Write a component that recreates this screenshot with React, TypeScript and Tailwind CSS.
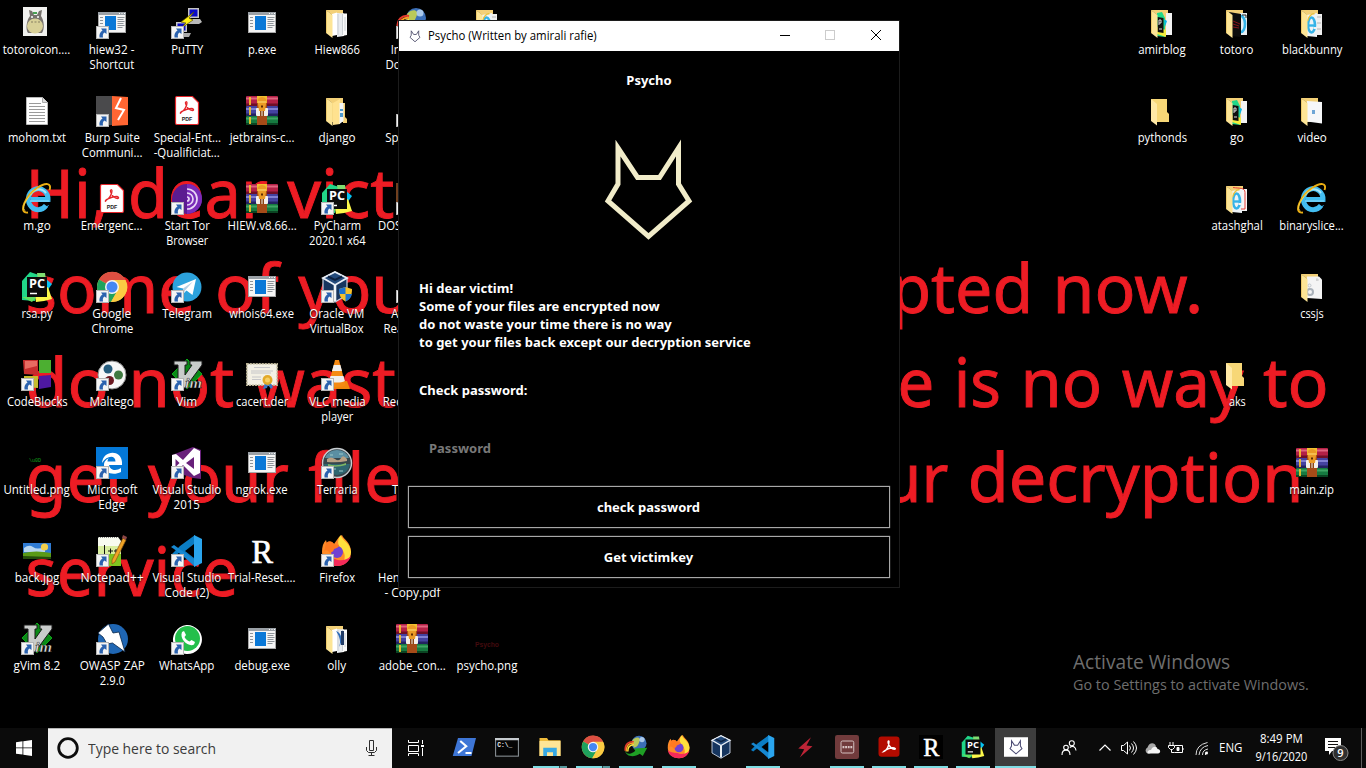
import { useLayoutEffect, useRef, useState } from "react";
import type { ReactNode } from "react";

/* Advance widths of the desktop UI face, in em. */
const ADVANCE: Record<string, number> = {
  a: 0.509, b: 0.588, c: 0.462, d: 0.589, e: 0.523, f: 0.313, g: 0.589, h: 0.565, i: 0.242, j: 0.242,
  k: 0.497, l: 0.242, m: 0.861, n: 0.566, o: 0.586, p: 0.588, q: 0.589, r: 0.348, s: 0.424, t: 0.339,
  u: 0.565, v: 0.479, w: 0.723, x: 0.459, y: 0.484, z: 0.452, " ": 0.274, ".": 0.245, ",": 0.217,
  A: 0.645, B: 0.573, C: 0.619, D: 0.701, E: 0.506, F: 0.488, G: 0.686, H: 0.71, I: 0.266, J: 0.357,
  K: 0.58, L: 0.471, M: 0.898, N: 0.748, O: 0.754, P: 0.56, Q: 0.754, R: 0.598, S: 0.531, T: 0.524,
  U: 0.687, V: 0.621, W: 0.934, X: 0.59, Y: 0.553, Z: 0.57, "-": 0.4, _: 0.415, "+": 0.684,
  "(": 0.302, ")": 0.302, ":": 0.217, "/": 0.389, "!": 0.284,
};
const textWidth = (s: string, size: number) =>
  [...s].reduce((sum, ch) => sum + (ADVANCE[ch] ?? 0.539), 0) * size;

function Fit({ text, size, center = false, width }: { text: string; size: number; center?: boolean; width?: number }) {
  const ref = useRef<HTMLSpanElement>(null);
  const [scale, setScale] = useState(1);
  useLayoutEffect(() => {
    if (ref.current) setScale((width ?? textWidth(text, size)) / ref.current.offsetWidth);
  }, [text, size, width]);
  return (
    <span
      ref={ref}
      className={center ? "inline-block origin-center whitespace-pre" : "inline-block origin-left whitespace-pre"}
      style={{ transform: `scaleX(${scale})` }}
    >
      {text}
    </span>
  );
}

/* ---------- icons (32 x 32 unless noted) ---------- */

const Exe = () => (
  <g>
    <rect x="2.500" y="5.500" width="27" height="20" fill="#f5f5f5" stroke="#a8a8a8" />
    <rect x="2" y="5" width="28" height="3" fill="#9aa0a6" />
    <path d="M23 6.500h1M25.500 6.500h1M28 6.500h1" stroke="#fff" />
    <rect x="9" y="9" width="11" height="14" fill="#0a78d7" />
    <path d="M4 10.500h3M4 13.500h3M4 16.500h3M4 19.500h3M21.500 10.500h7M21.500 12.500h6M21.500 14.500h7M21.500 16.500h6M21.500 18.500h7M21.500 20.500h5" stroke="#8d9399" />
  </g>
);

const Folder = ({ children }: { children?: ReactNode }) => (
  <g>
    <path d="M5 3h17v10l2 2v12H11V8z" fill="#f3d077" />
    {children}
    <path d="M5 3l6.500 5v23L5 26z" fill="#fde596" />
    <path d="M5.500 3.500V26" stroke="#e8c25f" strokeWidth=".8" />
  </g>
);
const Pages = () => (
  <g>
    <path d="M11 7l5-1.500V28l-5 1z" fill="#fff" />
    <path d="M16 6l7 .5V29l-7 1z" fill="#e9ecef" />
    <path d="M21 6.500h5V28l-5 1z" fill="#fafafa" />
    <path d="M17 7v21M21.500 7v21M24 10v14" stroke="#bfc5ca" strokeWidth=".8" />
  </g>
);
const EmptyFolder = () => (
  <g>
    <path d="M5 4h16v13l2 2v8H10z" fill="#f7d777" />
    <path d="M5 4l6 5v21.500L5 26z" fill="#ffe9a6" />
  </g>
);
const PagesFolder = () => <Folder><Pages /></Folder>;
const DjangoFolder = () => (
  <Folder>
    <path d="M12 8l7-4v25l-7 1z" fill="#ffe28f" />
    <path d="M22 8h2v14l2 2v4h-4z" fill="#f3d077" />
    <path d="M18.500 8h4v18l-4 3z" fill="#f2f5f8" />
    <path d="M19 14h3v2h-3zM19 18h3v4h-3z" fill="#4f9bd0" />
  </Folder>
);
const OllyFolder = () => (
  <Folder>
    <Pages />
    <path d="M15 8c6 2 7 10 3 16 2-5 1-10-3-16z" fill="#2c6ab8" />
    <path d="M20 8h3v14h-3z" fill="#203a64" />
  </Folder>
);
const PcFolder = () => (
  <Folder>
    <path d="M20 6h6v22h-6z" fill="#f3f3f3" />
    <path d="M11 6l5-1 3 6v19l-8-1z" fill="#21d789" />
    <path d="M11 20l9 3v7l-9-3z" fill="#f4ec3c" />
    <path d="M18 12l3 2-2 6z" fill="#07b8e6" />
    <path d="M11.500 10l6 1v15l-6-1z" fill="#101010" />
    <path d="M13 13v5m0-5h2v3h-2M13 22h3" stroke="#ddd" fill="none" />
  </Folder>
);
const IePart = () => (
  <g>
    <path d="M11 8l10-2v24l-10-1z" fill="#eef3f6" />
    <ellipse cx="15.500" cy="18" rx="3.500" ry="7.500" fill="none" stroke="#35b3e8" strokeWidth="2.600" />
    <path d="M12 18.500h7.500" stroke="#35b3e8" strokeWidth="2.400" />
    <path d="M17.500 21h3.500" stroke="#eef3f6" strokeWidth="2" />
    <path d="M11.500 14c1-5 5-8 7-7" stroke="#e9c13b" fill="none" strokeWidth="1.400" />
  </g>
);
const TotoroFolder = () => (
  <Folder>
    <path d="M19 6h7v22h-7z" fill="#e9eff3" />
    <ellipse cx="20" cy="17" rx="4" ry="8" fill="none" stroke="#35b3e8" strokeWidth="2.600" />
    <path d="M8 5l12 2v23l-10-1z" fill="#0c0c0c" />
    <path d="M12 14l7 3M12 17l6 2M12 20l6 1" stroke="#92151b" strokeWidth=".9" />
    <path d="M21 8h4v3" stroke="#222" fill="none" />
  </Folder>
);
const BunnyFolder = () => (
  <Folder>
    <path d="M20 7h6v21h-6z" fill="#efefef" />
    <path d="M21 10h4M21 16h4M21 22h4" stroke="#b5b5b5" />
    <IePart />
  </Folder>
);
const VideoFolder = () => (
  <Folder>
    <path d="M11 6l15 1v21.500l-15-2z" fill="#f6f7f9" />
    <path d="M16 15h3v4h-3z" fill="#6fa6d6" />
  </Folder>
);
const AtashFolder = () => (
  <Folder>
    <path d="M19 6h7v22h-7z" fill="#f6f6f6" />
    <IePart />
    <path d="M12 4.500c7 1 12 0 12 5V26h-4" stroke="#e53c35" fill="none" />
  </Folder>
);
const CssFolder = () => (
  <Folder>
    <path d="M11 5.500h12l3 3V28l-15-1z" fill="#f4f4f4" />
    <circle cx="14" cy="21" r="3" fill="none" stroke="#aab2ba" strokeWidth="2" />
    <circle cx="13.500" cy="14.500" r="1.500" fill="none" stroke="#c1c7cc" />
    <path d="M20 9h3M21 7v3" stroke="#bbb" strokeWidth=".7" />
  </Folder>
);

const Ie = () => (
  <g fill="none">
    <path d="M10 17.500H28.500A11 11 0 1 0 27.500 22" stroke="#2795d3" strokeWidth="1" />
    <path d="M10 16.500H27A9.800 10.500 0 1 0 25 22.500" stroke="#43bdf0" strokeWidth="5" />
    <path d="M9 12C11 6 20 4 25 10" stroke="#a7e6fc" strokeWidth="2" />
    <path d="M9 18H28" stroke="#8fdcf9" strokeWidth="1" />
    <path d="M7 29.500C-4 31 5 12 16 5 25-1 31 0 28.500 7" stroke="#e9ad12" strokeWidth="1.900" />
    <path d="M4.500 28C-1 25 7 12 17 5.500" stroke="#ffe15a" strokeWidth=".8" />
  </g>
);
const Pdf = () => (
  <g>
    <path d="M6 1.500h15.500l6 6V28c0 1-.5 1.500-1.500 1.500H6c-1 0-1.500-.5-1.500-1.500V3c0-1 .5-1.500 1.500-1.500z" fill="#fff" stroke="#e5252a" strokeWidth="1.200" />
    <path d="M10 17.500c3-1.500 6-6.500 6-9.500 0-2-2-1.500-1.500.5.5 3 4 7 7 7 2 0 1-2-1-2-4 0-8 2-10 3-2 1.500-1 2.500-.5 1z" fill="none" stroke="#e5252a" strokeWidth="1.300" />
    <text x="16" y="26" textAnchor="middle" fontSize="6" fontWeight="700" fill="#222" fontFamily="Liberation Sans, sans-serif" textLength="10.500" lengthAdjust="spacingAndGlyphs">PDF</text>
  </g>
);
const Rar = () => (
  <g>
    <rect y="1" width="32" height="10" rx="1" fill="#b32046" />
    <rect y="2.500" width="32" height="2" fill="#df6580" /><rect y="8.500" width="32" height="2.500" fill="#6f0f27" />
    <rect y="11" width="32" height="10" rx="1" fill="#4442a0" />
    <rect y="13" width="32" height="2" fill="#807fd2" /><rect y="18.500" width="32" height="2.500" fill="#232260" />
    <rect y="21" width="32" height="9" rx="1" fill="#167a40" />
    <rect y="22.500" width="32" height="2" fill="#3fa565" /><rect y="28" width="32" height="2" fill="#0a4422" />
    <path d="M4 2v8M4 12v8M4 22v7" stroke="#f2c12c" strokeWidth="1.800" />
    <rect x="11" y="1" width="10" height="29" fill="#a54b18" />
    <path d="M11 1h10v7H11z" fill="#f1c02f" />
    <rect x="10" y="13" width="12" height="8" rx="1" fill="#f3f0ea" />
    <path d="M11.500 5c1.500-4 7.500-4 9 0l-.5 4-1 7h-6l-1-7z" fill="#eb9b26" />
    <path d="M12 7h8" stroke="#ffe27a" />
    <path d="M15 10.500h2v2h-2z" fill="#5b2b05" />
    <path d="M14 16h1.500v5H14zM16.500 16H18v5h-1.500z" fill="#8a4415" />
  </g>
);
const Txt = () => (
  <g>
    <path d="M5.500 2.500h16l5 5v22h-21z" fill="#fff" stroke="#b8b8b8" />
    <path d="M21.500 2.500v5h5" fill="#ddd" stroke="#aaa" />
    <path d="M8 8.500h12M8 11.500h16M8 14.500h16M8 17.500h16M8 20.500h16M8 23.500h16M8 26.500h16" stroke="#9b9b9b" />
  </g>
);
const Totoro = () => (
  <g>
    <rect x="2" width="24" height="29" fill="#f1f1ef" />
    <path d="M9 9L8 3l3 1 2 4h3l2-4 3-1-1 6c3 4 4 13 1 17H7C4 22 6 12 9 9z" fill="#77726d" />
    <ellipse cx="14" cy="19" rx="8" ry="7.500" fill="#d8d098" />
    <path d="M12 5h4v2h-4z" fill="#49a052" />
    <path d="M10 10h2m4 0h2" stroke="#fff" strokeWidth="1.500" />
    <path d="M10 15h2m1.500 0h2m1.500 0h2" stroke="#857f60" />
  </g>
);
const Putty = () => (
  <g>
    <path d="M17 1h11v10H17z" fill="#c5c5c5" /><path d="M18.500 2.500h8v7h-8z" fill="#0909c8" />
    <path d="M14 12h15l2 3-3 2H14z" fill="#b9b9b9" />
    <path d="M5 15h11v10H5z" fill="#c5c5c5" /><path d="M6.500 16.500h8v7h-8z" fill="#0909c8" />
    <path d="M6 26h14l-2 4H6z" fill="#aaa" />
    <path d="M23 5l-13 10 5 1-6 6 13-9-4-2z" fill="#ffef13" stroke="#5a5200" strokeWidth=".7" />
  </g>
);
const Burp = () => (
  <g>
    <path d="M0 1l16 0v29l-16 1z" fill="#4a4a4c" />
    <path d="M16 1l16 1v28l-16 1z" fill="#ff6633" />
    <path d="M25 3l-5 10 8 2-6 10" fill="none" stroke="#fff" strokeWidth="2" />
  </g>
);
const Tor = () => (
  <g>
    <circle cx="16" cy="16" r="15" fill="#5b1c91" />
    <path d="M16 1a15 15 0 0 1 0 30z" fill="#7a2bb8" />
    <path d="M16 6a10 10 0 0 1 0 20M16 10a6 6 0 0 1 0 12M16 14a2 2 0 0 1 0 4" fill="none" stroke="#e9d7f6" strokeWidth="1.700" />
  </g>
);
const PyCharm = () => (
  <g>
    <path d="M1 10L9 1l9 3L14 30 1 29z" fill="#21d789" />
    <path d="M16 2l8 0 1 7-8 1z" fill="#7fdc70" />
    <path d="M25 8l6 5-5 7z" fill="#07c3f2" />
    <path d="M14 25l13-9 4 12-8 2-8 1z" fill="#fcf84a" />
    <path d="M1 26l10 5 4-5z" fill="#64e060" />
    <rect x="6" y="6" width="20" height="20" fill="#0b0b0b" />
    <path d="M9 22.500h7" stroke="#fff" strokeWidth="1.500" />
    <text x="8" y="17" fontSize="12" fontWeight="700" fill="#fff" fontFamily="Open Sans, sans-serif" textLength="16" lengthAdjust="spacingAndGlyphs">PC</text>
  </g>
);
const Chrome = () => (
  <g>
    <circle cx="16" cy="16" r="15" fill="#fbcb43" />
    <path d="M16 16L3 8.500A15 15 0 0 1 29.500 9z" fill="#dd4f42" />
    <path d="M16 16L3 8.500A15 15 0 0 0 15 31l5-9z" fill="#1fa25d" />
    <path d="M16 9h13.500A15 15 0 0 1 15 31l7-12z" fill="#fbcb43" />
    <circle cx="16" cy="16" r="7" fill="#f4f4f4" />
    <circle cx="16" cy="16" r="5.500" fill="#4587f3" />
  </g>
);
const Telegram = () => (
  <g>
    <circle cx="16" cy="16" r="14.500" fill="#2ca2dc" />
    <path d="M5.500 16L25 8l-3.500 16-6-4.500-3 3-.5-5z" fill="#fff" />
    <path d="M12 17.500L22 10.500l-8 9-1.500 3z" fill="#b5cfe4" />
  </g>
);
const VBox = () => (
  <g>
    <path d="M16 1l12 6v17l-12 7-12-7V7z" fill="#16355f" stroke="#c9d4e4" strokeWidth="1.200" />
    <path d="M4 7l12-6 12 6-12 7z" fill="#234a7b" stroke="#e8eef6" strokeWidth="1.800" />
    <path d="M16 14v16" stroke="#f0f4f8" strokeWidth="2.600" />
    <path d="M9 5.500l7 3.500 7-3.500" fill="none" stroke="#0c2140" strokeWidth="2" />
  </g>
);
const VBoxShield = () => (
  <g>
    <g transform="translate(-2 0)"><VBox /></g>
    <path d="M18 18l6.500-2L31 18c0 7-2 10-6.500 12.500C20 28 18 25 18 18z" fill="#f6c12c" />
    <path d="M24.500 16v7H18.500c-.5-2-.5-3-.5-5zM24.500 23H31c-1 4-3 6-6.500 7.500z" fill="#1e72d0" />
  </g>
);
const CodeBlocks = () => (
  <g>
    <path d="M2 1l15 0v15L3 15z" fill="#c72e2e" /><path d="M4 2h12v5L4 10z" fill="#e86b62" />
    <path d="M18 1h12v13H18z" fill="#4caf31" />
    <path d="M3 17l14 0v12L3 28z" fill="#c5bb2f" />
    <path d="M18 17l12-1v12l-12 2z" fill="#4e18a0" />
  </g>
);
const Maltego = () => (
  <g>
    <circle cx="16" cy="16" r="14" fill="#f7f7f7" stroke="#8a8a8a" />
    <circle cx="12" cy="10" r="4.500" fill="#265d7e" /><circle cx="22.500" cy="16" r="4.500" fill="#3f7a41" />
    <circle cx="13.500" cy="21.500" r="4.500" fill="#6b1820" />
  </g>
);
const Vim = () => (
  <g>
    <path d="M16 0l15 15-15 15L1 15z" fill="#0a8a17" stroke="#0cc41a" strokeWidth=".8" />
    <path d="M3 2h13v4h-2v10L21 6h-2V2h12v4L14 29H7V6H3z" fill="#c9cccb" stroke="#1a1a1a" />
    <text x="14" y="29" fontSize="15" fontStyle="italic" fontWeight="700" fill="#e8e8e8" stroke="#111" strokeWidth=".5" fontFamily="Liberation Serif, serif" textLength="17" lengthAdjust="spacingAndGlyphs">im</text>
  </g>
);
const Cert = () => (
  <g>
    <rect x=".8" y="4.800" width="30.400" height="21.400" fill="#f3f0e4" stroke="#b9b294" strokeWidth="1.600" strokeDasharray="2 1" />
    <path d="M8 8.500h16M5 12h22M5 14h20M6 18h9M6 20.500h9" stroke="#c6c6c8" />
    <path d="M19 24l-2 6 4-1 1-3 3 4 2-2-3-5z" fill="#3778c5" />
    <circle cx="21.500" cy="21" r="5" fill="#e2a929" /><circle cx="21.500" cy="21" r="2.500" fill="#f6cf62" />
  </g>
);
const Vlc = () => (
  <g>
    <path d="M6 23l20-1 3 8H3z" fill="#f0860d" />
    <path d="M14 1h4l6.500 25c-4 3-13 3-17 0z" fill="#f58a13" />
    <path d="M12.700 6h6.700l1.600 6H11zM9.500 17h13l1.400 5c-4 2-12 2-15.700 0z" fill="#eee" />
  </g>
);
const Untitled = () => (
  <text x="8" y="15" fontSize="5" fill="#12a01c" fontFamily="Liberation Mono, monospace">{"\\u0D"}</text>
);
const Edge = () => (
  <g>
    <rect width="32" height="32" fill="#0478d7" />
    <path d="M6 16C7 3 25 2 26 15v3H13c1 6 8 6 12 3v4c-8 4-17 1-17-7 0-4 3-6 5-7-1 1-1.500 2-1.500 3.500h8c0-7-9-6-13.500 1.500z" fill="#fff" />
  </g>
);
const VStudio = () => (
  <g>
    <path d="M22 0l8 3v29l-8-1L1 24V8z" fill="#68217a" />
    <path d="M1 8l4-1 7 6L23 1l6 3v22l-6 3-11-11-6 6-5-2z" fill="#fff" />
    <path d="M23 10v12l-8-6zM4.500 12v8l4-4z" fill="#68217a" />
  </g>
);
const Terraria = () => (
  <g>
    <circle cx="16" cy="16" r="14.500" fill="#37464c" stroke="#c7cdd1" strokeWidth="1.400" />
    <path d="M4 11a13 13 0 0 1 24 0z" fill="#5b8fa3" />
    <path d="M3 17h26c-1 6-5 10-13 11C8 27 4 23 3 17z" fill="#2f6670" />
    <path d="M6 12q4-3 8 0t6-1 6 1v2q-9 2-20 1z" fill="#b9a084" /><path d="M7 17q9 3 18-1v2q-9 3-18 1z" fill="#7eb663" />
    <path d="M9 8h3M18 7h4M10 22h5M18 24h4" stroke="#9cc9c9" />
  </g>
);
const BackJpg = () => (
  <g>
    <rect x="2" y="8" width="28" height="16" fill="#2f7bd3" />
    <path d="M3 13q5-4 9-1t12 0v5H3z" fill="#b9d6ef" />
    <path d="M2 18q13-3 28 0v6H2z" fill="#5a9a16" /><path d="M2 21l28 1v2H2z" fill="#244c0c" />
    <circle cx="23.500" cy="12" r="3.600" fill="#f3cf4a" />
  </g>
);
const Npp = () => (
  <g>
    <path d="M2 2h20l3 4v25H2z" fill="#f8fbef" /><path d="M2 19h23v12H2z" fill="#7fc41f" />
    <path d="M2 11h23v8H2z" fill="#d9ee9f" />
    <path d="M2 2.500h20" stroke="#888" strokeDasharray="1 1" />
    <path d="M8.500 10v12M12 16h5m-2.500-2.500v5M18 16h4m-2-2v4" stroke="#111" />
    <path d="M27 3l3 2-11 22-3 2v-4z" fill="#f0a326" stroke="#865511" strokeWidth=".7" />
    <path d="M27 0l4 2-1 3-4-2z" fill="#8c4646" />
  </g>
);
const Code = () => (
  <g>
    <path d="M24 0v32L9 17 3 22 0 20 9 11z" fill="#0b7dc4" />
    <path d="M0 12l3-2 21 15v6L3 14z" fill="#1788d1" />
    <path d="M23 0l8 4v24l-8 4z" fill="#2aa5ee" /><path d="M23 9v14l-9-7z" fill="#000" />
  </g>
);
const RIcon = () => (
  <g>
    <rect width="32" height="32" fill="#000" />
    <text x="5.500" y="27.500" fontSize="34" fill="#fff" stroke="#fff" strokeWidth=".7" fontFamily="Liberation Serif, serif" textLength="21.500" lengthAdjust="spacingAndGlyphs">R</text>
  </g>
);
const Firefox = () => (
  <g>
    <path d="M18 2l3-2c1 4 9 7 9 17 0 8-6 14-14 14S1 25 1 17c0-5 1-9 4-12l1 4c3-4 6-2 7 0z" fill="#ff8b28" />
    <path d="M20 0c0 5 9 7 10 17-1 7-5 11-9 12 6-8 1-14-3-18-2-5 0-9 2-11z" fill="#ffdf3c" />
    <path d="M1 20c1 7 7 11 15 11 7 0 12-4 14-10-5 5-12 5-16 3-6 0-10-1-13-4z" fill="#f42a5a" />
    <circle cx="16" cy="17" r="6" fill="#7141d1" />
    <path d="M5 8c3-3 6-2 8 1l5 1c0 3-3 3-5 4 0 2-2 3-4 4-2-3-5-4-6-1z" fill="#ff7a20" />
  </g>
);
const Zap = () => (
  <g>
    <circle cx="17" cy="16" r="15" fill="#1f66b3" />
    <path d="M2 10L12.500 1l4.500 9 6-1 6 20-12.500-9-5.500 1-4-7z" fill="#fff" stroke="#082447" strokeWidth=".8" />
  </g>
);
const Whats = () => (
  <g>
    <path d="M1 31l2-9A14.500 14.500 0 1 1 9 29z" fill="#fff" />
    <circle cx="16.500" cy="15.500" r="12.500" fill="#24bf4b" />
    <path d="M11 9l2-1 2 4-1.500 2c1 2 3 4 5 4.500l2-1.500 3.500 2-1 2.500c-5 3-15-5-12-12.500z" fill="#fff" />
  </g>
);
const Idm = () => (
  <g>
    <circle cx="20" cy="11" r="10" fill="#3b6fb8" />
    <path d="M11 7c6-7 12-3 10 1s-2 8-8 9z" fill="#b9c95a" /><circle cx="24" cy="6" r="3.500" fill="#a9c8ea" />
    <path d="M1.500 21C1 12 6 8 13 9" fill="none" stroke="#e4392e" strokeWidth="2" />
    <path d="M3 22c0-8 4-12 10-11" fill="none" stroke="#ff9d24" strokeWidth="2" />
    <path d="M5 22c0-6 3-9 8-9" fill="none" stroke="#ffe83c" strokeWidth="2" />
    <path d="M1 20c3 8 10 5 14 1l-2-3 18-1-6 11-4-3c-7 5-18 5-20-5z" fill="#1f9f25" />
  </g>
);
const Psycho = () => (
  <text x="4" y="24" fontSize="8" fontWeight="700" fill="#430b0e" fontFamily="Liberation Sans, sans-serif" textLength="24" lengthAdjust="spacingAndGlyphs">Psycho</text>
);
const Brown = () => <rect x="0" y="0" width="32" height="32" fill="#70401f" />;
const Blank = () => <g />;

type Item = { c: number; r: number; t: string[]; i: () => ReactNode; s?: boolean };
const ITEMS: Item[] = [
  { c: 1, r: 1, t: ["totoroicon...."], i: Totoro },
  { c: 2, r: 1, t: ["hiew32 -", "Shortcut"], i: Exe, s: true },
  { c: 3, r: 1, t: ["PuTTY"], i: Putty, s: true },
  { c: 4, r: 1, t: ["p.exe"], i: Exe },
  { c: 5, r: 1, t: ["Hiew866"], i: PagesFolder },
  { c: 6, r: 1, t: ["Internet", "Download"], i: Idm, s: true },
  { c: 7, r: 1, t: [], i: BunnyFolder },
  { c: 1, r: 2, t: ["mohom.txt"], i: Txt },
  { c: 2, r: 2, t: ["Burp Suite", "Communi..."], i: Burp, s: true },
  { c: 3, r: 2, t: ["Special-Ent...", "-Qualificiat..."], i: Pdf },
  { c: 4, r: 2, t: ["jetbrains-c..."], i: Rar },
  { c: 5, r: 2, t: ["django"], i: DjangoFolder },
  { c: 6, r: 2, t: ["Special Ed"], i: Blank, s: true },
  { c: 1, r: 3, t: ["m.go"], i: Ie },
  { c: 2, r: 3, t: ["Emergenc..."], i: Pdf },
  { c: 3, r: 3, t: ["Start Tor", "Browser"], i: Tor, s: true },
  { c: 4, r: 3, t: ["HIEW.v8.66..."], i: Rar },
  { c: 5, r: 3, t: ["PyCharm", "2020.1 x64"], i: PyCharm, s: true },
  { c: 6, r: 3, t: ["DOSBox 0.74"], i: Brown, s: true },
  { c: 1, r: 4, t: ["rsa.py"], i: PyCharm },
  { c: 2, r: 4, t: ["Google", "Chrome"], i: Chrome, s: true },
  { c: 3, r: 4, t: ["Telegram"], i: Telegram, s: true },
  { c: 4, r: 4, t: ["whois64.exe"], i: Exe },
  { c: 5, r: 4, t: ["Oracle VM", "VirtualBox"], i: VBoxShield, s: true },
  { c: 6, r: 4, t: ["Acrobat", "Reader DC"], i: Blank, s: true },
  { c: 1, r: 5, t: ["CodeBlocks"], i: CodeBlocks, s: true },
  { c: 2, r: 5, t: ["Maltego"], i: Maltego, s: true },
  { c: 3, r: 5, t: ["Vim"], i: Vim, s: true },
  { c: 4, r: 5, t: ["cacert.der"], i: Cert },
  { c: 5, r: 5, t: ["VLC media", "player"], i: Vlc, s: true },
  { c: 6, r: 5, t: ["Recycle Bin"], i: Blank },
  { c: 1, r: 6, t: ["Untitled.png"], i: Untitled },
  { c: 2, r: 6, t: ["Microsoft", "Edge"], i: Edge, s: true },
  { c: 3, r: 6, t: ["Visual Studio", "2015"], i: VStudio, s: true },
  { c: 4, r: 6, t: ["ngrok.exe"], i: Exe },
  { c: 5, r: 6, t: ["Terraria"], i: Terraria, s: true },
  { c: 6, r: 6, t: ["Tor.doc"], i: Blank },
  { c: 1, r: 7, t: ["back.jpg"], i: BackJpg },
  { c: 2, r: 7, t: ["Notepad++"], i: Npp, s: true },
  { c: 3, r: 7, t: ["Visual Studio", "Code (2)"], i: Code, s: true },
  { c: 4, r: 7, t: ["Trial-Reset...."], i: RIcon },
  { c: 5, r: 7, t: ["Firefox"], i: Firefox, s: true },
  { c: 6, r: 7, t: ["Henderson 1", "- Copy.pdf"], i: Blank },
  { c: 1, r: 8, t: ["gVim 8.2"], i: Vim, s: true },
  { c: 2, r: 8, t: ["OWASP ZAP", "2.9.0"], i: Zap, s: true },
  { c: 3, r: 8, t: ["WhatsApp"], i: Whats, s: true },
  { c: 4, r: 8, t: ["debug.exe"], i: Exe },
  { c: 5, r: 8, t: ["olly"], i: OllyFolder },
  { c: 6, r: 8, t: ["adobe_con..."], i: Rar },
  { c: 7, r: 8, t: ["psycho.png"], i: Psycho },
  { c: 16, r: 1, t: ["amirblog"], i: PcFolder },
  { c: 17, r: 1, t: ["totoro"], i: TotoroFolder },
  { c: 18, r: 1, t: ["blackbunny"], i: BunnyFolder },
  { c: 16, r: 2, t: ["pythonds"], i: EmptyFolder },
  { c: 17, r: 2, t: ["go"], i: PcFolder },
  { c: 18, r: 2, t: ["video"], i: VideoFolder },
  { c: 17, r: 3, t: ["atashghal"], i: AtashFolder },
  { c: 18, r: 3, t: ["binaryslice..."], i: Ie },
  { c: 18, r: 4, t: ["cssjs"], i: CssFolder },
  { c: 17, r: 5, t: ["aks"], i: EmptyFolder },
  { c: 18, r: 6, t: ["main.zip"], i: Rar },
];

const Arrow = () => (
  <g>
    <rect x=".5" y="19.500" width="12" height="12" fill="#f4f4f4" stroke="#b5b5b5" />
    <path d="M5 21.500h5.500V27l-2-1.500c-1.500 1-2 2.500-1.500 5H3.500c-.5-3 .5-5.500 3-7z" fill="#2b62ae" />
  </g>
);

function DesktopItem({ item }: { item: Item }) {
  const Art = item.i;
  return (
    <div className="flex flex-col items-center pt-[7px]" style={{ gridColumn: item.c, gridRow: item.r }}>
      <svg viewBox="0 0 32 32" className="h-8 w-8 shrink-0">
        <Art />
        {item.s && <Arrow />}
      </svg>
      <div className="mt-[3px] flex flex-col items-center text-[12px] leading-[15px] text-white [text-shadow:0_1px_2px_#000]">
        {item.t.map((line) => (
          <Fit key={line} text={line} size={12} center />
        ))}
      </div>
    </div>
  );
}

const WALL = [
  "Hi, dear victim",
  "some of your files are encrypted now.",
  "do not waste your time there is no way to",
  "get your files back except our decryption",
  "service",
];
const WALL_SIZE = 71;

function Wallpaper() {
  return (
    <svg className="absolute inset-0" width="1366" height="768" fill="#ed1c24" stroke="#ed1c24" strokeWidth="0.9" fontFamily="Noto Sans, Open Sans, sans-serif" fontSize="67.5">
      {WALL.map((line, row) => {
        let x = 25.5;
        return line.split(" ").map((word, n) => {
          const at = x;
          const w = textWidth(word, WALL_SIZE);
          x += w + 0.274 * WALL_SIZE;
          return (
            <text key={n} x={at} y={218 + row * 94.6} textLength={w} lengthAdjust="spacingAndGlyphs">
              {word}
            </text>
          );
        });
      })}
    </svg>
  );
}

const WOLF = "M618 148L637.500 177.500H659.500L678.500 148V184L689 201L648.500 236.500L608 201L618 184Z";

function PsychoWindow() {
  return (
    <div className="absolute top-[20px] left-[398px] flex h-[568px] w-[502px] flex-col border border-[#1c1c1c] bg-black">
      <div className="flex h-[30px] shrink-0 items-center bg-white text-[12px] text-black">
        <svg className="ml-[10px]" width="12" height="14" viewBox="600 134 97 112">
          <path d={WOLF} fill="none" stroke="#4a4a68" strokeWidth="7" />
        </svg>
        <div className="ml-[7px] flex-1 leading-[16px]">
          <Fit text="Psycho (Written by amirali rafie)" size={12} width={169} />
        </div>
        <svg width="138" height="30" fill="none" stroke="#000">
          <path d="M19 14.500h10" />
          <rect x="64.500" y="9.500" width="9" height="9" stroke="#ccc" />
          <path d="M110 9l10 10M120 9l-10 10" />
        </svg>
      </div>
      <div className="flex flex-1 flex-col font-['Noto_Sans','Open_Sans',sans-serif] text-[13px] leading-[18px] font-bold text-white">
        <p className="mt-[20px] text-center">Psycho</p>
        <svg className="mt-[31px] self-center" width="120" height="130" viewBox="589 120 120 130">
          <path d={WOLF} fill="none" stroke="#f1ecc9" strokeWidth="5" />
        </svg>
        <div className="mt-[29px] pl-[20px]">
          <p>Hi dear victim!</p>
          <p>Some of your files are encrypted now</p>
          <p>do not waste your time there is no way</p>
          <p>to get your files back except our decryption service</p>
        </div>
        <p className="mt-[30px] pl-[20px]">Check password:</p>
        <p className="mt-[40px] pl-[30px] text-[#787878]">Password</p>
        <div className="mt-[29px] flex flex-col gap-[8px] pr-[9px] pl-[9px]">
          <div className="flex h-[42px] items-center justify-center border border-[#a8a8a8] pr-px shadow-[0_0_1px_#999]">check password</div>
          <div className="flex h-[42px] items-center justify-center border border-[#a8a8a8] pr-px shadow-[0_0_1px_#999]">Get victimkey</div>
        </div>
      </div>
    </div>
  );
}

/* ---------- taskbar ---------- */

const PowerShell = () => (
  <g>
    <path d="M8 4h24l-6 24H1z" fill="#3e76d6" />
    <path d="M11 8l8 7-11 9M18 24h8" stroke="#fff" strokeWidth="2.800" fill="none" />
  </g>
);
const Cmd = () => (
  <g>
    <rect x=".8" y="4.800" width="30.400" height="23.400" fill="#050505" stroke="#8d9499" strokeWidth="1.400" />
    <path d="M0 5.500h32" stroke="#c6cbcf" strokeWidth="3" />
    <text x="3" y="16" fontSize="8.500" fontWeight="700" fill="#eee" fontFamily="Liberation Mono, monospace" textLength="20" lengthAdjust="spacingAndGlyphs">C:\_</text>
  </g>
);
const Explorer = () => (
  <g>
    <path d="M2 4h10l2 3h16v21H2z" fill="#f0bc3c" /><path d="M2 8h28v20H2z" fill="#ffe596" />
    <path d="M7 28V17h18v11h-5v-5h-8v5z" fill="#38a9e4" />
  </g>
);
const Bolt = () => <path d="M24 3L7 18l8 1-6 11 17-15-8-1z" fill="#bd2436" />;
const RedBox = () => (
  <g>
    <rect x="0" y="0" width="32" height="32" rx="3" fill="#713b3c" />
    <rect x="8" y="8" width="17" height="16" rx="2" fill="none" stroke="#d7c4c4" strokeWidth="1.300" />
    <path d="M10 16h13" stroke="#d7c4c4" strokeWidth="3" strokeDasharray="2.500 1" />
  </g>
);
const Acrobat = () => (
  <g>
    <rect x="2" y="2" width="28" height="27" rx="4" fill="#b30b00" />
    <path d="M9 22c4-1 7-8 7-13 0-2-2-1-1 2 1 4 5 8 8 8s1-2-2-2c-5 0-8 2-11 4z" fill="none" stroke="#fff" strokeWidth="1.900" />
  </g>
);
const WolfTile = () => (
  <g>
    <rect x="0" y="3" width="32" height="26" fill="#fff" />
    <svg x="6" y="5" width="20" height="22" viewBox="600 134 97 112">
      <path d={WOLF} fill="none" stroke="#4c4c74" strokeWidth="7" />
    </svg>
  </g>
);

type AppEntry = { i: () => ReactNode; u?: boolean; multi?: boolean; active?: boolean };
const APPS_A: AppEntry[] = [
  { i: PowerShell }, { i: Cmd }, { i: Explorer, u: true, multi: true }, { i: Chrome, u: true, multi: true },
  { i: Idm, u: true }, { i: Firefox, u: true },
];
const APPS_B: AppEntry[] = [
  { i: VBox }, { i: Code, u: true }, { i: Bolt }, { i: RedBox, u: true }, { i: Acrobat, u: true },
  { i: RIcon, u: true }, { i: PyCharm, u: true }, { i: WolfTile, u: true, active: true },
];

function TaskButton({ app }: { app: AppEntry }) {
  const Art = app.i;
  return (
    <div className={app.active ? "ml-px flex h-full w-[41px] flex-col items-center bg-[#3d3d3d]" : "flex h-full w-full flex-col items-center"}>
      <svg viewBox="0 0 32 32" className="mt-[7px] h-6 w-6"><Art /></svg>
      {app.u && (
        <div className={app.active ? "mt-auto flex h-[2px] w-full" : "mt-auto flex h-[2px] w-[34px]"}>
          <div className="flex-1 bg-[#7fdde4]" />
          {app.multi && <div className="w-[8px] border-l border-[#2c4648] bg-[#57999e]" />}
        </div>
      )}
    </div>
  );
}

function Taskbar() {
  return (
    <div className="absolute bottom-0 left-0 flex h-[40px] w-full bg-[#0b0b0b] text-white">
      <div className="flex w-[48px] items-center justify-center">
        <svg width="16" height="16" viewBox="0 0 16 16" fill="#fff">
          <path d="M0 2.200L6.500 1.300v6.200H0zM7.300 1.200L16 0v7.500H7.300zM0 8.300h6.500v6.300L0 13.700zM7.300 8.300H16V16l-8.700-1.200z" />
        </svg>
      </div>
      <div className="flex w-[344px] items-center border-t border-[#b5b5b5] bg-[#f1f1f1] pb-px text-[15px] text-[#3b3b3b]">
        <svg className="ml-[8px]" width="24" height="24"><circle cx="12" cy="12" r="9.300" fill="none" stroke="#0c0c0c" strokeWidth="2.800" /></svg>
        <div className="ml-[8px] flex-1 pb-px leading-[20px]"><Fit text="Type here to search" size={15} width={128} /></div>
        <svg className="mr-[14px]" width="13" height="18" fill="none" stroke="#2e2e2e">
          <path d="M4.500 1.500h4v10h-4zM1.500 8v3.500l2 2h6l2-2V8M6.500 14v2.500M3.500 16.500h6" />
        </svg>
      </div>
      <div className="flex w-[50px] items-center pl-[16px]">
        <svg width="17" height="16" fill="none" stroke="#fff">
          <path d="M.5 0v2.500h10V0M.5 5.500h10v6H.5zM.5 16v-2.500h10V16M14.500 0v4M14.500 8v8" />
          <path d="M13 5h3v2h-3z" fill="#fff" stroke="none" />
        </svg>
      </div>
      {APPS_A.map((a, n) => <div key={n} className="h-full w-[43px]"><TaskButton app={a} /></div>)}
      {APPS_B.map((a, n) => <div key={n} className="h-full w-[42px]"><TaskButton app={a} /></div>)}
      <div className="flex flex-1 items-center pl-[25px]">
        <svg width="17" height="16" fill="none" stroke="#fff" strokeWidth="1.100">
          <circle cx="5" cy="7.500" r="2.300" /><path d="M1 15c0-6.500 8-6.500 8 0" />
          <circle cx="10.800" cy="3.200" r="2.500" /><path d="M8.800 7.500c3-2.500 6-.5 6.200 3" />
        </svg>
        <svg className="ml-[20px]" width="14" height="10" fill="none" stroke="#fff" strokeWidth="1.200"><path d="M1.500 7.500L7 2l5.500 5.500" /></svg>
        <svg className="ml-[8px]" width="20" height="16" fill="none" stroke="#fff">
          <path d="M1.500 5.500h2l4-3.500v12l-4-3.500h-2zM9.500 5.500q2 2.500 0 5M11.500 3.500q4 4.500 0 9M13.500 1.500q6 6.500 0 13" />
        </svg>
        <svg className="ml-[4px]" width="17" height="13">
          <path d="M3.500 11.500a3.300 3.300 0 0 1 0-6C5 0 11 0 12 4.500L6 11.500z" fill="#a9a9a9" />
          <path d="M4 11.500c-1.500-2 1-4 3-3.500C8.500 4 13 4 13.500 7c3.500 0 3.500 4.500.5 4.500z" fill="#f4f4f4" />
        </svg>
        <svg className="ml-[7px]" width="17" height="14" fill="none" stroke="#fff">
          <path d="M2 1v3M5 1v3M.5 4.500h6v2l-2 2h-2l-2-2zM3.500 9v2.500h3M7 4.500h7.500v7H6.500M15 7v2" />
          <path d="M9 6.500h2v3H9z" fill="#fff" />
        </svg>
        <svg className="ml-[10px]" width="15" height="15" fill="none" stroke="#ddd">
          <path d="M10.500 14q-1-1.500 2-3M7.500 14q0-5 5.500-6M4 14q1-8 9-9.500M1 14Q1 4 12.500 1.500" />
          <circle cx="11.500" cy="12" r="1.500" fill="#fff" stroke="none" />
        </svg>
        <div className="ml-[9px] w-[36px] text-[12px] leading-[16px]"><Fit text="ENG" size={12} width={23} /></div>
        <div className="flex w-[52px] flex-col items-center text-[12px] leading-[18px]">
          <Fit text="8:49 PM" size={12} center width={43} />
          <Fit text="9/16/2020" size={12} center width={52} />
        </div>
        <svg className="ml-[17px]" width="27" height="28">
          <path d="M1 4h16v13H8l-3 4v-4H1z" fill="#fff" />
          <path d="M4 7.500h10M4 10.500h10M4 13.500h7" stroke="#111" />
          <circle cx="16.500" cy="19" r="7.500" fill="#303030" stroke="#8a8a8a" />
          <text x="16.500" y="23" textAnchor="middle" fontSize="11" fontWeight="600" fill="#fff">9</text>
        </svg>
        <div className="ml-[10px] h-full w-px bg-[#5e5e5e]" />
      </div>
    </div>
  );
}

export default function App() {
  return (
    <div className="relative h-[768px] w-[1366px] overflow-hidden bg-black font-['Open_Sans','Noto_Sans',sans-serif]">
      <Wallpaper />
      <div className="relative -ml-[0.5px] grid grid-cols-[repeat(18,75px)] grid-rows-[repeat(8,88px)]">
        {ITEMS.map((item) => <DesktopItem key={`${item.c}-${item.r}`} item={item} />)}
      </div>
      <PsychoWindow />
      <div className="absolute top-[648px] left-[1073px] flex flex-col text-[#6e6e6e]">
        <div className="text-[20px] leading-[27px]"><Fit text="Activate Windows" size={20} width={157} /></div>
        <div className="text-[15px] leading-[18px]"><Fit text="Go to Settings to activate Windows." size={15} width={236} /></div>
      </div>
      <Taskbar />
    </div>
  );
}
